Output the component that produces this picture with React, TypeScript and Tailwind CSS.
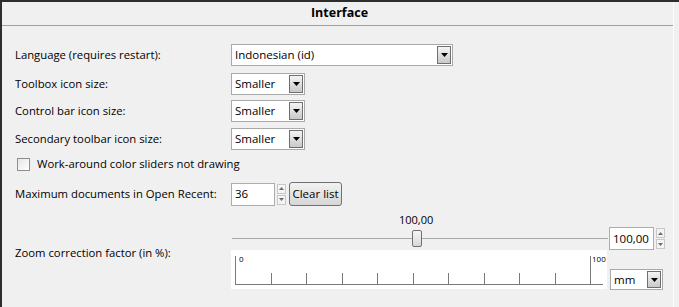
import React from 'react'

function Arrow({ up = false, small = false }: { up?: boolean; small?: boolean }) {
  const w = small ? 5 : 7
  const h = small ? 3 : 4
  return (
    <svg width={w} height={h} viewBox={`0 0 ${w} ${h}`} className="block">
      {up ? (
        <polygon points={`0,${h} ${w},${h} ${w / 2},0`} fill={small ? '#6d6d6d' : '#000'} />
      ) : (
        <polygon points={`0,0 ${w},0 ${w / 2},${h}`} fill={small ? '#6d6d6d' : '#000'} />
      )}
    </svg>
  )
}

function Combo({ value, width, height = 22 }: { value: string; width: string; height?: number }) {
  return (
    <div
      className={`${width} flex items-stretch bg-white border border-[#a9a9a9] pl-[3px]`}
      style={{ height }}
    >
      <span className="flex-1 flex items-center text-[11.5px] text-black leading-none">{value}</span>
      <div className="w-[14px] my-[1px] mr-[1px] border border-[#6f6f6f] bg-gradient-to-b from-[#f4f4f4] to-[#c9c9c9] flex items-center justify-center">
        <Arrow />
      </div>
    </div>
  )
}

function Spin({ value, width }: { value: string; width: string }) {
  return (
    <div className="flex items-stretch h-[23px]">
      <div className={`${width} bg-white border border-[#abadb3] flex items-center pl-[3px] text-[11.5px]`}>{value}</div>
      <div className="ml-[2px] w-[9px] flex flex-col gap-[1px] py-[1px]">
        <div className="flex-1 border border-[#c8c8c8] bg-[#f4f4f4] flex items-center justify-center">
          <Arrow up small />
        </div>
        <div className="flex-1 border border-[#c8c8c8] bg-[#f4f4f4] flex items-center justify-center">
          <Arrow small />
        </div>
      </div>
    </div>
  )
}

function Row({ label, children, className = '' }: { label: string; children: React.ReactNode; className?: string }) {
  return (
    <div className={`flex items-center ${className}`}>
      <span className="w-[216px] text-[11.3px] text-black">{label}</span>
      {children}
    </div>
  )
}

export default function App() {
  const ticks = [1, 2, 3, 4, 5, 6, 7, 8, 9]
  return (
    <div
      className="w-[679px] h-[307px] bg-[#f0f0f0] border-t-2 border-l-2 border-[#2d2d2d] overflow-hidden text-black"
      style={{ fontFamily: '"Open Sans", "Noto Sans", sans-serif' }}
    >
      <div className="w-[672px] h-full border-r border-[#fcfcfc]">
        {/* Header */}
        <div className="h-[24px] border-b border-[#a0a0a0] flex items-center justify-center">
          <span className="text-[12.5px] font-bold ml-[4px]">Interface</span>
        </div>

        <div className="pl-[13px]">
          <Row label="Language (requires restart):" className="mt-[18px] h-[22px]">
            <Combo value="Indonesian (id)" width="w-[222px]" />
          </Row>
          <Row label="Toolbox icon size:" className="mt-[7px] h-[22px]">
            <Combo value="Smaller" width="w-[74px]" />
          </Row>
          <Row label="Control bar icon size:" className="mt-[5px] h-[22px]">
            <Combo value="Smaller" width="w-[74px]" />
          </Row>
          <Row label="Secondary toolbar icon size:" className="mt-[6px] h-[22px]">
            <Combo value="Smaller" width="w-[74px]" />
          </Row>

          {/* Checkbox */}
          <div className="flex items-center h-[13px] mt-[8px] ml-[2px]">
            <div className="w-[13px] h-[13px] border border-[#8f8f8f] bg-gradient-to-br from-[#e6e6e6] to-[#ffffff]" />
            <span className="ml-[7px] text-[11.3px]">Work-around color sliders not drawing</span>
          </div>

          {/* Recent documents */}
          <Row label="Maximum documents in Open Recent:" className="mt-[11px] h-[24px]">
            <Spin value="36" width="w-[44px]" />
            <button className="ml-[3px] h-[24px] w-[53px] rounded-[3px] border border-[#707070] bg-gradient-to-b from-[#f2f2f2] to-[#d6d6d6] text-[11.5px] leading-none">
              Clear list
            </button>
          </Row>

          {/* Zoom correction */}
          <div className="flex mt-[7px]">
            <div className="w-[216px] flex items-center pt-[4px]">
              <span className="text-[11.3px]">Zoom correction factor (in %):</span>
            </div>
            <div className="flex flex-col">
              <div className="relative h-[14px] w-[376px]">
                <span className="absolute left-[168px] top-0 text-[11px] leading-[14px]">100,00</span>
              </div>
              <div className="flex items-center">
                <div className="relative w-[377px] h-[23px] flex items-center">
                  <div className="w-full h-[1px] bg-[#a8a8a8] ml-[1px]" />
                  <div className="absolute left-[181px] top-[3px] w-[10px] h-[17px] rounded-[2px] border border-[#707070] bg-gradient-to-b from-[#f6f6f6] to-[#d8d8d8]" />
                </div>
                <div className="ml-[1px]">
                  <Spin value="100,00" width="w-[45px]" />
                </div>
              </div>
              <div className="flex">
                <div className="relative w-[376px] h-[39px] bg-white">
                  <div className="absolute left-[4px] top-[6px] bottom-[4px] w-[1px] bg-[#7a7a7a]" />
                  <div className="absolute left-[4px] right-[4px] bottom-[4px] h-[1px] bg-[#7a7a7a]" />
                  {ticks.map((i) => (
                    <div
                      key={i}
                      className="absolute bottom-[4px] h-[12px] w-[1px] bg-[#7a7a7a]"
                      style={{ left: 4 + i * 35.5 }}
                    />
                  ))}
                  <div className="absolute left-[359px] top-[6px] bottom-[4px] w-[1px] bg-[#7a7a7a]" />
                  <span className="absolute left-[8px] top-[5px] text-[8px] leading-none">0</span>
                  <span className="absolute left-[361px] top-[5px] text-[8px] leading-none">100</span>
                </div>
                <div className="ml-[3px] mt-[19px]">
                  <Combo value="mm" width="w-[53px]" height={21} />
                </div>
              </div>
            </div>
          </div>
        </div>
      </div>
    </div>
  )
}
